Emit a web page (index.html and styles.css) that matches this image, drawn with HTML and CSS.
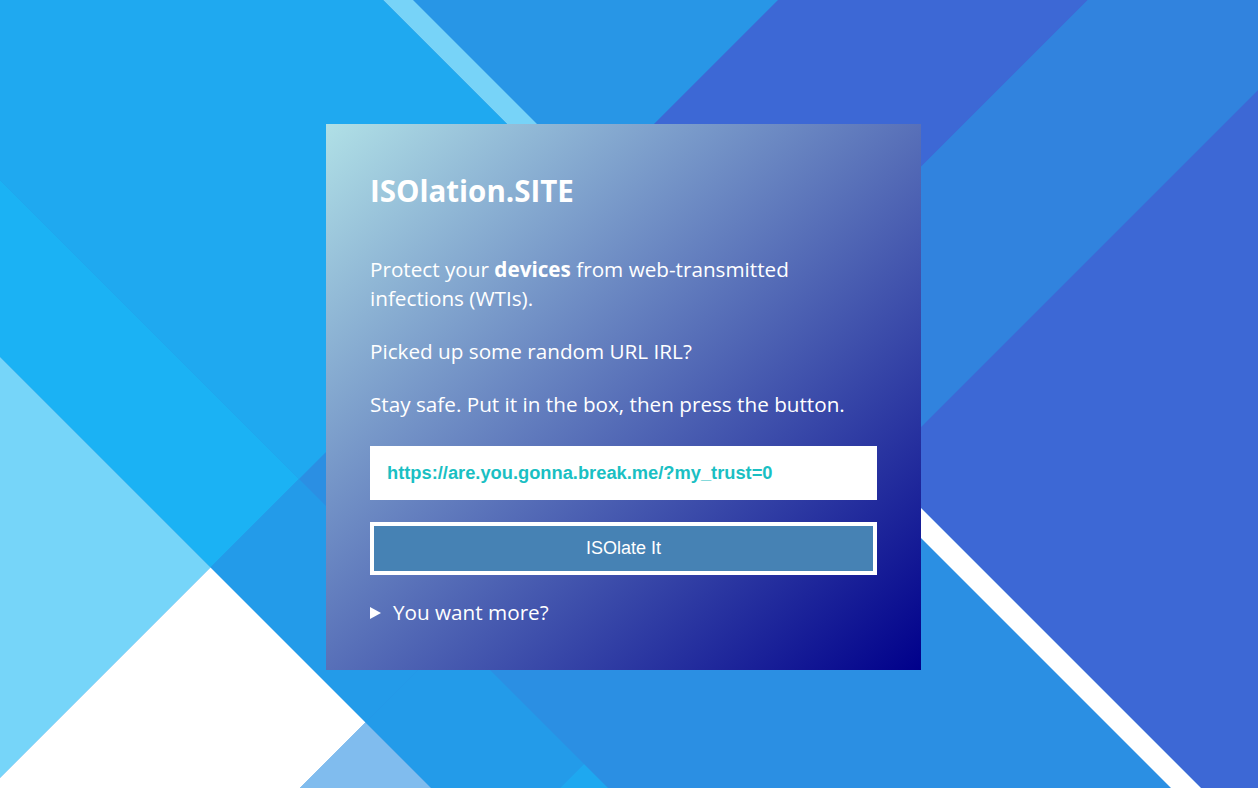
FILE: index.html
```html
<!DOCTYPE html>
<html lang="en">
<head>
  <meta charset="UTF-8" />
  <meta name="viewport" content="width=device-width, initial-scale=1.0"/>
  <title>ISOlation.SITE</title>
  <link rel="stylesheet" href="styles.css">
</head>
<body>

<!-- backdrop: diagonal bands, drawn in a 45deg rotated space -->
<svg class="backdrop" viewBox="0 0 1258 788" preserveAspectRatio="xMidYMid slice" aria-hidden="true">
  <rect width="1258" height="788" fill="#2b8fe3"/>
  <g transform="matrix(.5 .5 -.5 .5 0 0)">
    <rect x="-100" y="-1400" width="878" height="987" fill="#2896e6"/>
    <rect x="-100" y="-413" width="878" height="30" fill="#77d3f8"/>
    <rect x="-100" y="-383" width="878" height="563" fill="#1fa9f0"/>
    <rect x="-100" y="180" width="878" height="177" fill="#1bb2f4"/>
    <rect x="-100" y="357" width="878" height="700" fill="#76d5f9"/>

    <rect x="778" y="-1400" width="310" height="987" fill="#3d68d5"/>
    <rect x="778" y="-413" width="310" height="30" fill="#77d3f8"/>
    <rect x="778" y="180" width="310" height="177" fill="#239be9"/>
    <rect x="778" y="357" width="310" height="700" fill="#ffffff"/>

    <rect x="1088" y="-1400" width="260" height="987" fill="#3183de"/>
    <rect x="1088" y="-413" width="260" height="30" fill="#ffffff"/>
    <rect x="1088" y="180" width="260" height="177" fill="#239be9"/>
    <rect x="1088" y="357" width="260" height="700" fill="#80bcee"/>

    <rect x="1348" y="-1400" width="1000" height="987" fill="#3d68d5"/>
    <rect x="1348" y="-413" width="1000" height="30" fill="#ffffff"/>
    <rect x="1348" y="180" width="1000" height="877" fill="#1ea8f0"/>
  </g>
</svg>

<main class="card">
  <h1 class="title">ISOlation.SITE</h1>
  <p>Protect your <strong>devices</strong> from web-transmitted infections (WTIs).</p>
  <p>Picked up some random URL IRL?</p>
  <p>Stay safe. Put it in the box, then press the button.</p>

  <form class="isolate-form" onsubmit="return false">
    <input class="url-input" type="text" name="url" value="https://are.you.gonna.break.me/?my_trust=0">
    <button class="isolate-btn" type="submit">ISOlate It</button>
  </form>

  <details class="more">
    <summary>You want more?</summary>
    <p>Links are opened in a remote, isolated browser. Nothing touches your device.</p>
  </details>
</main>

</body>
</html>
```

FILE: styles.css
```css
html, body {
  margin: 0;
  height: 100%;
}
body {
  font-family: "Open Sans", Lato, sans-serif;
  color: #fff;
  display: flex;
  justify-content: center;
  align-items: flex-start;
  overflow: hidden;
}
.backdrop {
  position: fixed;
  top: 0;
  left: 0;
  width: 100%;
  height: 100%;
  z-index: -1;
}
.card {
  width: 595px;
  box-sizing: border-box;
  margin: 124px 11px 0 0;
  padding: 49px 44px 43px;
  background: linear-gradient(to bottom right, #b0e0e6, #00008b);
}
.title {
  margin: 0 0 46px;
  font-size: 29.5px;
  line-height: 36px;
  font-weight: bold;
}
.card p {
  margin: 0 0 24px;
  font-size: 20.7px;
  line-height: 29px;
}
.card p strong {
  font-weight: bold;
}
.isolate-form {
  margin-top: 27px;
  display: flex;
  flex-direction: column;
  gap: 22px;
}
.url-input {
  height: 54px;
  box-sizing: border-box;
  padding: 0 17px;
  border: none;
  outline: none;
  background: #fff;
  color: #1abfc3;
  font-family: "Liberation Sans", Arial, sans-serif;
  font-size: 18.3px;
  font-weight: bold;
}
.isolate-btn {
  height: 53px;
  border: 4px solid #fff;
  background-color: #4682b4;
  color: #fff;
  font-family: "Liberation Sans", Arial, sans-serif;
  font-size: 18px;
  cursor: pointer;
}
.more {
  margin-top: 23px;
}
.more summary {
  list-style: none;
  display: flex;
  align-items: center;
  font-size: 20.7px;
  line-height: 29px;
  cursor: pointer;
}
.more summary::-webkit-details-marker {
  display: none;
}
.more summary::before {
  content: "";
  width: 0;
  height: 0;
  border-left: 11px solid #fff;
  border-top: 6.5px solid transparent;
  border-bottom: 6.5px solid transparent;
  margin-right: 12px;
}
```
